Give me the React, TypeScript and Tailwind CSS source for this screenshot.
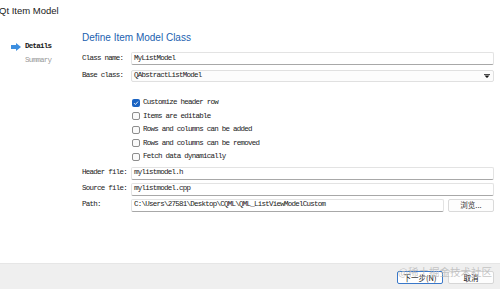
import {ChevronDown} from 'lucide-react';

const mono = "font-['Liberation_Mono','Noto_Sans_CJK_SC',monospace] text-[7.5px] tracking-[-0.75px] text-[#1a1a1a]";

function TextRow({label, value, children}: {label: string; value?: string; children?: React.ReactNode}) {
  return (
    <div className="flex items-center h-[13px]">
      <div className={`w-[49px] shrink-0 ${mono}`}>{label}</div>
      {children ?? (
        <div className={`flex-1 h-[13px] flex items-center px-[2px] bg-white border border-[#e3e3e3] border-b-[#a8a8a8] rounded-[2px] ${mono}`}>
          {value}
        </div>
      )}
    </div>
  );
}

function Check({label, checked}: {label: string; checked?: boolean}) {
  return (
    <div className="flex items-center h-[13.5px] gap-[3px]">
      {checked ? (
        <div className="size-[8px] rounded-[2px] bg-[#1a63c2] flex items-center justify-center">
          <svg width="6" height="6" viewBox="0 0 6 6">
            <path d="M1 3.1 L2.4 4.5 L5 1.6" stroke="white" strokeWidth="0.9" fill="none"/>
          </svg>
        </div>
      ) : (
        <div className="size-[8px] rounded-[2px] border border-[#8d8d8d] bg-[#fafafa]"/>
      )}
      <span className={mono}>{label}</span>
    </div>
  );
}

export default function App() {
  return (
    <div className="w-[500px] h-[289px] bg-white flex flex-col overflow-hidden relative font-['Liberation_Sans',sans-serif]">
      {/* title bar */}
      <div className="h-[22px] flex items-center -ml-[1px] text-[9.5px] text-[#1a1a1a]">Qt Item Model</div>

      <div className="flex-1 flex">
        {/* wizard steps */}
        <div className="w-[82px] shrink-0 pt-[19px] pl-[11px]">
          <div className="flex items-center gap-[4px] h-[12px]">
            <svg width="10" height="8" viewBox="0 0 10 8">
              <path d="M0 2 H5 V0 L10 4 L5 8 V6 H0 Z" fill="#3d8fe0"/>
            </svg>
            <span className={`${mono} font-bold`}>Details</span>
          </div>
          <div className={`pl-[14px] h-[15px] flex items-center ${mono} !text-[#9a9a9a]`}>Summary</div>
        </div>

        {/* page */}
        <div className="flex-1 pr-[6px] pt-[8px]">
          <div className="h-[14px] flex items-center text-[10px] text-[#1c5fb0]">Define Item Model Class</div>

          <div className="mt-[8px] flex flex-col gap-[4px]">
            <TextRow label="Class name:" value="MyListModel"/>
            <TextRow label="Base class:">
              <div className={`flex-1 h-[12px] flex items-center justify-between px-[2px] bg-[#fcfcfc] border border-[#e0e0e0] rounded-[2px] ${mono}`}>
                <span>QAbstractListModel</span>
                <svg width="6" height="4" viewBox="0 0 6 4" className="mr-[1px]">
                  <path d="M0 0 H6 V0.8 H0 Z M0.5 1.5 H5.5 L3 4 Z" fill="#111"/>
                </svg>
              </div>
            </TextRow>
          </div>

          <div className="mt-[14px] pl-[50px] flex flex-col">
            <Check label="Customize header row" checked/>
            <Check label="Items are editable"/>
            <Check label="Rows and columns can be added"/>
            <Check label="Rows and columns can be removed"/>
            <Check label="Fetch data dynamically"/>
          </div>

          <div className="mt-[3px] flex flex-col gap-[3px]">
            <TextRow label="Header file:" value="mylistmodel.h"/>
            <TextRow label="Source file:" value="mylistmodel.cpp"/>
            <TextRow label="Path:">
              <div className="flex-1 flex gap-[4px]">
                <div className={`flex-1 h-[13px] flex items-center px-[2px] bg-white border border-[#e3e3e3] border-b-[#a8a8a8] rounded-[2px] ${mono}`}>
                  C:\Users\27581\Desktop\CQML\QML_ListViewModelCustom
                </div>
                <button className="w-[46px] h-[13px] flex items-center justify-center bg-[#fdfdfd] border border-[#dadada] rounded-[2px] text-[7.5px] text-[#333] font-['Noto_Sans_CJK_SC',sans-serif]">
                  浏览...
                </button>
              </div>
            </TextRow>
          </div>
        </div>
      </div>

      {/* button bar */}
      <div className="h-[26px] bg-[#efefef] border-t border-[#e6e6e6] flex items-center justify-end gap-[5px] pr-[6px] pt-[2px]">
        <button className="w-[46px] h-[13px] flex items-center justify-center bg-white border border-[#3a78c9] rounded-[2px] text-[7.5px] text-[#111] font-['Noto_Sans_CJK_SC',sans-serif]">
          下一步(N)
        </button>
        <button className="w-[46px] h-[13px] flex items-center justify-center bg-[#fdfdfd] border border-[#d6d6d6] rounded-[2px] text-[7.5px] text-[#111] font-['Noto_Sans_CJK_SC',sans-serif]">
          取消
        </button>
      </div>

      {/* watermark */}
      <div className="absolute left-[398px] top-[264px] text-[10.5px] text-[#b8b8b8]/80 font-['Noto_Sans_CJK_SC',sans-serif] pointer-events-none">
        @稀土掘金技术社区
      </div>
    </div>
  );
}
